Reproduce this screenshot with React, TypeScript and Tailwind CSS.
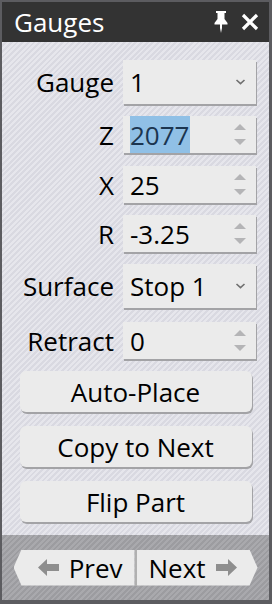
import { ReactNode } from 'react';

const FONT = "font-['Open_Sans','Noto_Sans',sans-serif]";

function Label({ children }: { children: ReactNode }) {
  return <div className="w-[112px] shrink-0 text-right leading-none">{children}</div>;
}

function Combo({ value, h }: { value: string; h: string }) {
  return (
    <div className={`relative ml-[9px] flex w-[133px] items-center bg-[#ebebeb] pl-[7px] shadow-[1px_2px_0_#a3a3a6] ${h}`}>
      <span className="leading-none">{value}</span>
      <svg className="absolute right-[10px] top-1/2 -translate-y-1/2" width="11" height="7" viewBox="0 0 11 7">
        <path d="M1.5 1.5 L5.5 5.2 L9.5 1.5" fill="none" stroke="#707070" strokeWidth="1.6" />
      </svg>
    </div>
  );
}

function Spin({ value, selected }: { value: string; selected?: boolean }) {
  return (
    <div className="relative ml-[9px] flex h-[37px] w-[133px] items-center bg-[#ebebeb] pl-[7px] shadow-[1px_2px_0_#a3a3a6]">
      {selected ? (
        <span className="flex h-[37px] items-center bg-[#90c0e6] pr-[1px] leading-none text-[#1b3550]">{value}</span>
      ) : (
        <span className="leading-none">{value}</span>
      )}
      <div className="absolute right-[10px] top-[8px] flex flex-col gap-[9px]">
        <svg width="12" height="6" viewBox="0 0 12 6">
          <path d="M0 6 L6 0 L12 6 Z" fill="#b4b4b6" />
        </svg>
        <svg width="12" height="6" viewBox="0 0 12 6">
          <path d="M0 0 L12 0 L6 6 Z" fill="#b4b4b6" />
        </svg>
      </div>
    </div>
  );
}

function Row({ children, className }: { children: ReactNode; className?: string }) {
  return <div className={`flex items-center ${className ?? ''}`}>{children}</div>;
}

function Btn({ children, className }: { children: ReactNode; className?: string }) {
  return (
    <div
      className={`mx-auto flex h-[41px] w-[232px] items-center justify-center rounded-[6px] bg-[#ebebeb] leading-none shadow-[1px_2px_0_#a3a3a6] ${className ?? ''}`}
    >
      {children}
    </div>
  );
}

export default function App() {
  return (
    <div className={`flex h-[604px] w-[272px] flex-col border-l-2 border-t-2 border-r-[3px] border-b-[4px] border-[#5c5c60] text-[26px] text-black ${FONT}`}>
      <div className="flex h-[40px] shrink-0 items-center bg-[#333333] pl-[12px] pr-[10px] text-white">
        <span className="text-[26px] leading-none">Gauges</span>
        <div className="ml-auto flex items-center gap-[13px]">
          <svg width="14" height="22" viewBox="0 0 14 22">
            <path d="M2 0 H12 V2 H10.5 V8 L13.5 12 V13.5 H8 V17 L7 22 L6 17 V13.5 H0.5 V12 L3.5 8 V2 H2 Z" fill="#ffffff" />
          </svg>
          <svg width="18" height="18" viewBox="0 0 18 18">
            <path d="M2 2 L16 16 M16 2 L2 16" stroke="#ffffff" strokeWidth="3.2" />
          </svg>
        </div>
      </div>

      <div className="flex flex-1 flex-col bg-[repeating-linear-gradient(135deg,#e6e6ec_0px,#e6e6ec_2px,#d9d9e1_2px,#d9d9e1_4px)]">
        <Row className="mt-[18px]">
          <Label>Gauge</Label>
          <Combo value="1" h="h-[44px]" />
        </Row>
        <Row className="mt-[12px]">
          <Label>Z</Label>
          <Spin value="2077" selected />
        </Row>
        <Row className="mt-[13px]">
          <Label>X</Label>
          <Spin value="25" />
        </Row>
        <Row className="mt-[12px]">
          <Label>R</Label>
          <Spin value="-3.25" />
        </Row>
        <Row className="mt-[12px]">
          <Label>Surface</Label>
          <Combo value="Stop 1" h="h-[44px]" />
        </Row>
        <Row className="mt-[14px]">
          <Label>Retract</Label>
          <Spin value="0" />
        </Row>

        <Btn className="mt-[12px]">Auto-Place</Btn>
        <Btn className="mt-[14px]">Copy to Next</Btn>
        <Btn className="mt-[14px]">Flip Part</Btn>

        <div className="mt-auto flex h-[65px] items-center justify-center bg-[repeating-linear-gradient(135deg,#a9a9ad_0px,#a9a9ad_2px,#9c9ca0_2px,#9c9ca0_4px)]">
          <div className="flex h-[36px] items-stretch">
            <div className="flex w-[121px] items-center justify-end gap-[10px] bg-[#ebebeb] pr-[12px] leading-none [clip-path:polygon(8px_0,100%_0,100%_100%,8px_100%,0_50%)]">
              <svg width="21" height="17" viewBox="0 0 21 17">
                <path d="M0 8.5 L9 0 V5 H21 V12 H9 V17 Z" fill="#8e8e8e" />
              </svg>
              <span>Prev</span>
            </div>
            <div className="w-[2px] bg-[#b0b0b0]" />
            <div className="flex w-[121px] items-center gap-[10px] bg-[#ebebeb] pl-[12px] leading-none [clip-path:polygon(0_0,calc(100%-8px)_0,100%_50%,calc(100%-8px)_100%,0_100%)]">
              <span>Next</span>
              <svg width="21" height="17" viewBox="0 0 21 17">
                <path d="M21 8.5 L12 0 V5 H0 V12 H12 V17 Z" fill="#8e8e8e" />
              </svg>
            </div>
          </div>
        </div>
      </div>
    </div>
  );
}
